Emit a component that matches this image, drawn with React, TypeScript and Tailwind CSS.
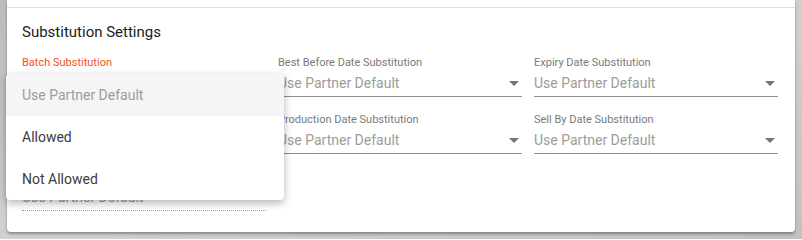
import React from "react";

const fields = [
  { label: "Batch Substitution", active: true },
  { label: "Best Before Date Substitution" },
  { label: "Expiry Date Substitution" },
  { label: "Serial Number Substitution" },
  { label: "Production Date Substitution" },
  { label: "Sell By Date Substitution" },
  { label: "Lot Substitution", disabled: true },
];

const options = ["Use Partner Default", "Allowed", "Not Allowed"];

const Field = ({ label, active, disabled }: { label: string; active?: boolean; disabled?: boolean }) => (
  <div className="flex flex-col">
    <span
      className={`text-[11px] leading-[14px] ${active ? "text-[#f4511e]" : "text-[#7a7a7a]"}`}
    >
      {label}
    </span>
    <div
      className={`relative flex h-[27px] items-center border-b ${
        disabled ? "border-dotted border-[#9e9e9e]" : "border-[#8f8f8f]"
      }`}
    >
      <span className="text-[14px] text-[#9c9c9c]">Use Partner Default</span>
      {!disabled && (
        <span className="absolute right-[3px] top-[11px] h-0 w-0 border-x-[5px] border-t-[5px] border-x-transparent border-t-[#757575]" />
      )}
    </div>
  </div>
);

export default function App() {
  return (
    <div
      className="relative h-[239px] w-[802px] overflow-hidden bg-gradient-to-br from-[#bdbbb9] via-[#d3d1cf] to-[#c4c2c0]"
      style={{ fontFamily: "Roboto, 'Liberation Sans', sans-serif" }}
    >
      <div className="mx-[7px] h-[232px] rounded-b-[4px] bg-white shadow-[0_2px_3px_rgba(0,0,0,0.35)]">
        <div className="h-[7px]" />
        <div className="border-t border-[#e0e0e0] px-[15px] pt-[14px]">
          <h2 className="text-[15px] leading-[20px] text-[#212121]">Substitution Settings</h2>
          <div className="mt-[14px] grid grid-cols-[244px_244px_244px] gap-x-[12px] gap-y-[16px]">
            {fields.map((f, i) => (
              <Field key={i} label={f.label} active={f.active} disabled={f.disabled} />
            ))}
          </div>
        </div>
      </div>

      <div className="absolute left-[6px] top-[74px] w-[278px] overflow-hidden rounded-[4px] bg-white shadow-[0_3px_8px_rgba(0,0,0,0.3)]">
        {options.map((o, i) => (
          <div
            key={o}
            className={`flex h-[42px] items-center px-[16px] text-[14px] ${
              i === 0 ? "bg-[#f5f5f5] text-[#9c9c9c]" : "text-[#3c3c3c]"
            }`}
          >
            {o}
          </div>
        ))}
      </div>
    </div>
  );
}
